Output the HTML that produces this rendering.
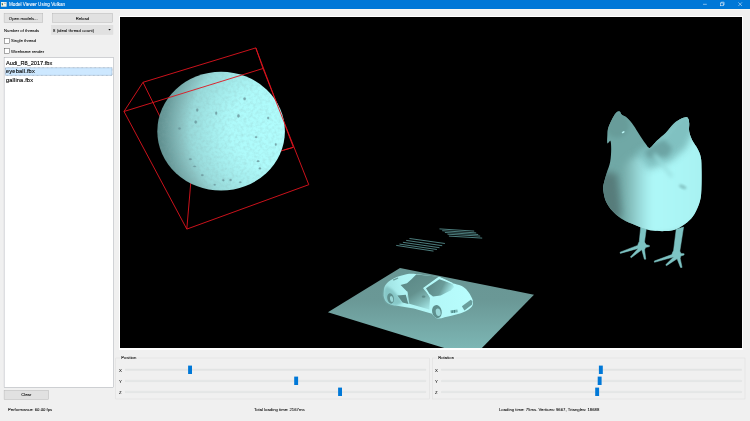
<!DOCTYPE html>
<html>
<head>
<meta charset="utf-8">
<title>Model Viewer Using Vulkan</title>
<style>
html,body{margin:0;padding:0;}
body{width:750px;height:421px;overflow:hidden;background:#f0f0f0;position:relative;font-family:"Liberation Sans",sans-serif;color:#000;}
.abs{position:absolute;}
.t{position:absolute;margin-top:0.6px;font-size:10.9px;line-height:15.36px;white-space:nowrap;color:#000;transform:scale(0.390625);transform-origin:0 0;-webkit-text-stroke:0.15px currentColor;filter:blur(0.5px);}
#titlebar{left:0;top:0;width:750px;height:8.6px;background:#0078d7;}
#title{left:9.2px;top:1.1px;color:#fff;font-size:11.8px;}
.bt{text-align:center;}
.li{position:absolute;left:6.2px;font-size:14.4px;line-height:22px;white-space:nowrap;color:#000;transform:scale(0.390625);transform-origin:0 0;-webkit-text-stroke:0.3px currentColor;filter:blur(0.5px);}
#view{left:119.8px;top:17.2px;width:622.2px;height:331.3px;background:#000;overflow:hidden;}
#viewb{left:118.6px;top:16px;width:624.6px;height:333.7px;background:#fff;}
.gt{position:absolute;font-size:10.9px;line-height:15.36px;background:#f0f0f0;padding:0 3px;color:#000;transform:scale(0.390625);transform-origin:0 0;white-space:nowrap;-webkit-text-stroke:0.15px currentColor;filter:blur(0.5px);}
</style>
</head>
<body>
<div id="titlebar" class="abs"></div>
<div class="abs" style="left:0;top:8.6px;width:750px;height:1.6px;background:#f8f8f3;"></div>
<svg class="abs" style="left:1.1px;top:2px" width="5.6" height="4.7" viewBox="0 0 5.6 4.7"><rect x="0" y="0" width="5.6" height="4.7" fill="#f1f1e6"/><rect x="0.8" y="1" width="1.1" height="2.2" rx="0.5" fill="#2f6a50"/><rect x="3" y="0.7" width="1.8" height="1.2" fill="#b9bcc0"/></svg>
<div id="title" class="t">Model Viewer Using Vulkan</div>
<svg class="abs" style="left:690px;top:0" width="60" height="8.6" viewBox="0 0 60 8.6">
<path d="M13 4.3h3.8" stroke="#fff" stroke-width="0.5" fill="none"/>
<rect x="30.4" y="3" width="2.8" height="2.8" stroke="#fff" stroke-width="0.5" fill="none"/>
<path d="M31.3 3V2.2h2.8v2.8h-0.9" stroke="#fff" stroke-width="0.5" fill="none"/>
<path d="M48.4 2.4l3.6 3.6M52 2.4l-3.6 3.6" stroke="#fff" stroke-width="0.5" fill="none"/>
</svg>

<svg class="abs" style="left:0;top:0" width="750" height="421" viewBox="0 0 750 421">
<g fill="#e1e1e1" stroke="#adadad" stroke-width="0.4">
<rect x="4.1" y="13.4" width="38.7" height="9"/>
<rect x="52.5" y="13.4" width="60.2" height="9"/>
<rect x="4.1" y="390.4" width="44.6" height="9.1"/>
</g>
<rect x="51.5" y="25.2" width="61.5" height="9.2" fill="#e1e1e1" stroke="#dadada" stroke-width="0.4"/>
<path d="M108.3 29h2.5l-1.25 1.4z" fill="#111"/>
<g fill="#fff" stroke="#333" stroke-width="0.4">
<rect x="4.5" y="38.5" width="4.7" height="4.7"/>
<rect x="4.5" y="48.65" width="4.7" height="4.7"/>
</g>
<rect x="4.1" y="57.6" width="109.4" height="329.7" fill="#fff" stroke="#828790" stroke-width="0.33"/>
<rect x="5.5" y="67.7" width="106.6" height="7.7" fill="#cde8ff" stroke="#3f5f7f" stroke-width="0.45" stroke-dasharray="0.8 0.5"/>
<g fill="none" stroke="#d8d8d8" stroke-width="0.4">
<rect x="115.8" y="358" width="313.4" height="41"/>
<rect x="432.6" y="358" width="312.4" height="41"/>
</g>
<g fill="#e4e6e6" stroke="#d8d8d8" stroke-width="0.2">
<rect x="125.3" y="369" width="300.6" height="1.5" rx="0.5"/>
<rect x="125.3" y="380.2" width="300.6" height="1.5" rx="0.5"/>
<rect x="125.3" y="391.2" width="300.6" height="1.5" rx="0.5"/>
<rect x="441.2" y="369" width="300.5" height="1.5" rx="0.5"/>
<rect x="441.2" y="380.2" width="300.5" height="1.5" rx="0.5"/>
<rect x="441.2" y="391.2" width="300.5" height="1.5" rx="0.5"/>
</g>
<g fill="#0078d7">
<rect x="188.1" y="365.6" width="3.9" height="8.4"/>
<rect x="294.2" y="376.6" width="3.9" height="8.4"/>
<rect x="338.1" y="387.6" width="3.9" height="8.4"/>
<rect x="598.9" y="365.6" width="3.9" height="8.4"/>
<rect x="597.7" y="376.6" width="3.9" height="8.4"/>
<rect x="595.2" y="387.6" width="3.9" height="8.4"/>
</g>
</svg>
<div class="t bt" style="left:4.2px;top:15.1px;width:98.8px;">Open models...</div>
<div class="t bt" style="left:52.2px;top:15.1px;width:155.6px;">Reload</div>
<div class="t" style="left:4.2px;top:27.1px;">Number of threads</div>
<div class="t" style="left:53.3px;top:27.1px;letter-spacing:0.12px;">8 (ideal thread count)</div>
<div class="t" style="left:11.2px;top:37.9px;">Single thread</div>
<div class="t" style="left:11.2px;top:48.2px;">Wireframe render</div>

<div class="li" style="top:58.8px;">Audi_R8_2017.fbx</div>
<div class="li" style="top:67.3px;left:5.6px;letter-spacing:0.48px;">eyeball.fbx</div>
<div class="li" style="top:76px;letter-spacing:0.42px;">gallina.fbx</div>

<div class="t bt" style="left:4.3px;top:391.9px;width:113.9px;">Clear</div>
<div class="t" style="left:7.6px;top:406.8px;">Performance: 60.00 fps</div>
<div class="t" style="left:253.5px;top:406.8px;">Total loading time: 2167ms</div>
<div class="t" style="left:498.7px;top:406.8px;">Loading time: 75ms. Vertices: 9667, Triangles: 18688</div>

<div class="gt" style="left:119.9px;top:355.2px;">Position</div>
<div class="gt" style="left:436.5px;top:355.2px;">Rotation</div>

<div class="t" style="left:118.8px;top:367.1px;">X</div>
<div class="t" style="left:118.8px;top:378.2px;">Y</div>
<div class="t" style="left:118.8px;top:389.2px;">Z</div>

<div class="t" style="left:435.2px;top:367.1px;">X</div>
<div class="t" style="left:435.2px;top:378.2px;">Y</div>
<div class="t" style="left:435.2px;top:389.2px;">Z</div>

<div id="viewb" class="abs"></div>
<div id="view" class="abs">
<svg width="622.2" height="331.3" viewBox="119.8 17.2 622.2 331.3" style="position:absolute;left:0;top:0;display:block">
<defs>
<radialGradient id="gs" cx="270" cy="129" r="125" gradientUnits="userSpaceOnUse">
<stop offset="0" stop-color="#b0fdfd"/><stop offset="0.32" stop-color="#aefafa"/><stop offset="0.48" stop-color="#a4ecec"/><stop offset="0.64" stop-color="#98dada"/><stop offset="0.72" stop-color="#88c0c0"/><stop offset="0.84" stop-color="#6a9c9c"/><stop offset="0.92" stop-color="#5a8888"/><stop offset="1" stop-color="#507c7c"/>
</radialGradient>
<linearGradient id="gp" x1="0" y1="268" x2="0" y2="348" gradientUnits="userSpaceOnUse">
<stop offset="0" stop-color="#699694"/><stop offset="0.4" stop-color="#6a9896"/><stop offset="0.65" stop-color="#72a4a2"/><stop offset="1" stop-color="#7cb6b4"/>
</linearGradient>
<linearGradient id="gc" x1="603" y1="150" x2="700" y2="200" gradientUnits="userSpaceOnUse">
<stop offset="0" stop-color="#78c4c4"/><stop offset="0.45" stop-color="#9be2e2"/><stop offset="0.8" stop-color="#b0f6f6"/><stop offset="1" stop-color="#a4ecec"/>
</linearGradient>
<filter id="nz" x="0" y="0" width="1" height="1"><feTurbulence type="fractalNoise" baseFrequency="0.32" numOctaves="2" seed="7" result="n"/><feColorMatrix in="n" type="matrix" values="0 0 0 0 0.25  0 0 0 0 0.42  0 0 0 0 0.42  1.6 0 0 0 -0.62" result="c"/><feComposite in="c" in2="SourceGraphic" operator="in"/></filter>
</defs>
<!-- back edges of bounding box -->
<g stroke="#e0141e" stroke-width="0.9" fill="none">
<path d="M142.8 82.5L255.6 48.1L293.2 147.5L190 178L142.8 82.5M186.6 229.3L191 178"/>
</g>
<!-- sphere -->
<ellipse cx="220.9" cy="131.4" rx="63.8" ry="59.4" fill="url(#gs)"/>
<ellipse cx="220.9" cy="131.4" rx="63.3" ry="58.9" fill="#fff" filter="url(#nz)" opacity="0.3"/>
<g fill="#6a949a" stroke="#6a949a" stroke-width="0.25" opacity="0.8">
<ellipse cx="197" cy="110.2" rx="1.1" ry="1.5"/><ellipse cx="216" cy="113.3" rx="1" ry="1.7"/><ellipse cx="195.5" cy="122.1" rx="1.2" ry="1.5"/><ellipse cx="179.3" cy="128.7" rx="1.3" ry="1"/>
<ellipse cx="244.4" cy="98.9" rx="1.2" ry="1.3"/><ellipse cx="238.2" cy="116.1" rx="1.2" ry="1.6"/><ellipse cx="267.9" cy="118.2" rx="0.9" ry="1.3"/>
<ellipse cx="190.2" cy="159.4" rx="1.3" ry="0.9"/><ellipse cx="194.4" cy="166.6" rx="1.4" ry="0.7"/><ellipse cx="202.1" cy="175.3" rx="1.3" ry="0.9"/><ellipse cx="214.5" cy="184.9" rx="1.1" ry="0.8"/>
<ellipse cx="255.9" cy="137.3" rx="1.2" ry="0.9"/><ellipse cx="275.6" cy="144.7" rx="0.8" ry="1.3"/><ellipse cx="257.9" cy="161.4" rx="1.4" ry="0.9"/><ellipse cx="259.7" cy="168.6" rx="1.2" ry="0.9"/>
<ellipse cx="223.1" cy="180.5" rx="1" ry="1"/><ellipse cx="230.4" cy="180.2" rx="1.1" ry="1"/><ellipse cx="240.1" cy="182.5" rx="1.2" ry="0.8"/>
</g>
<!-- front edges of bounding box -->
<g stroke="#e0141e" stroke-width="0.9" fill="none">
<path d="M142.8 82.5L123.8 111.7L262.8 68.7L255.6 48.1M262.8 68.7L308.6 184.9L186.6 229.3L123.8 111.7M283.4 150.3L293.2 147.5"/>
</g>
<!-- ground plane -->
<path d="M327.7 312.5L399.8 268.3L533.8 295L481.4 348.5L445 348.5z" fill="url(#gp)"/>
<!-- floating grilles -->
<g stroke="#66a8a8" stroke-width="0.75" fill="none">
<path d="M409.3 238.7L444.7 243.7M406 240.6L442 245.9M402.7 242.5L439.3 247.9M399.3 244.3L436.7 249.7M396 245.6L433.3 251.3"/>
<path d="M439.3 229.1L474 231.3M442 230.9L476 233.1M444.7 232.7L478 234.7M447.3 234.4L480 236.3M448.7 236.3L482 238.3"/>
</g>
<defs>
<linearGradient id="gcb" x1="384" y1="300" x2="470" y2="285" gradientUnits="userSpaceOnUse">
<stop offset="0" stop-color="#9ddede"/><stop offset="0.25" stop-color="#b0f4f4"/><stop offset="1" stop-color="#b8fdfd"/>
</linearGradient>
<linearGradient id="gck" x1="408" y1="278" x2="428" y2="308" gradientUnits="userSpaceOnUse">
<stop offset="0" stop-color="#5d8a88"/><stop offset="0.45" stop-color="#64928f"/><stop offset="0.75" stop-color="#80b8b6"/><stop offset="1" stop-color="#a0e2e2"/>
</linearGradient>
<linearGradient id="gws" x1="430" y1="284" x2="450" y2="294" gradientUnits="userSpaceOnUse">
<stop offset="0" stop-color="#5d8a88"/><stop offset="0.55" stop-color="#6a9c9a"/><stop offset="1" stop-color="#a6ecec"/>
</linearGradient>
</defs>
<g>
<!-- body -->
<path d="M383.8 289.8C384 287.5 384.6 286 385.7 284.7C387 283 388.6 281.5 390.8 280.2C392.8 279 394.8 277.9 397.2 277C400 276 403 275 406.2 274.4C409 274 412.5 273.9 415.2 274.2L438.6 277.2C443.5 279 448 281.5 452.1 283.4C455.5 284.3 458.3 284.8 461 286C463.6 287.4 465.7 289 467.4 291.1C469 293 470.4 295.2 471.3 297.5C472.2 299.2 472.8 301 472.8 302.6C472.8 304.5 472.4 306 471.3 307.1C469.6 308.9 467.4 310.4 464.9 311.6C462.2 313 459.2 314 455.9 314.8C452.2 316 448.3 316.9 444.4 317.4C442 318.4 439.5 318.8 437 318.6C434.8 318 433 316 431.8 314L413.6 308.8L395.1 305.6C393.6 305.8 391.5 305.4 390 304.5C388.4 303.9 387 303 386 302C384.6 300.3 383.9 298.2 383.5 295.9C383.5 293.7 383.6 291.8 383.8 289.8z" fill="url(#gcb)"/>
<!-- rear side -->
<path d="M383.8 290L386.4 286.2L392 289.6L397 295L402.6 303L396 305.6L390 304.5L386 302L383.5 296z" fill="#84c4c4" filter="url(#b1)" opacity="0.9"/>
<path d="M392.6 279.8L397.6 277.6L398.2 278.6L393.4 280.9z" fill="#6a9e9c"/>
<!-- cockpit -->
<path d="M416 274.6L439.1 276.9L424.4 288.2L429.8 298.2L429.1 309.6L408.2 303.8L406.8 291.7L400.4 285.3L406.8 283.4L411.3 279.5z" fill="url(#gck)"/>
<!-- windshield glass -->
<path d="M425.8 288.5L439.2 279.5L452.1 284L454 287.2L450.8 290.4L440.5 295.6L432.8 296.8L429 293.6z" fill="url(#gws)"/>
<!-- windshield frame -->
<path d="M431.6 298L423.6 288.4L438.8 277.4L452.5 283.6" stroke="#b6fbfb" stroke-width="1.1" fill="none" stroke-linejoin="round"/>
<!-- door edge -->
<path d="M406.9 291.7L408.6 304" stroke="#b0f4f4" stroke-width="0.8" fill="none"/>
<!-- side intake -->
<path d="M397.2 295.6L405.6 294.9L408.2 304.2L402.4 302.6z" fill="#5d8a88"/>
<!-- mirror -->
<ellipse cx="423.4" cy="296.9" rx="1.9" ry="1.1" fill="#5d8a88"/>
<!-- wheels -->
<ellipse cx="390.4" cy="298.6" rx="3.3" ry="5.3" fill="#5f908e" transform="rotate(-12 390.4 298.6)"/>
<ellipse cx="391.4" cy="299.2" rx="1.6" ry="3" fill="#9ad8d8" transform="rotate(-12 391.4 299.2)"/>
<ellipse cx="436.7" cy="311.8" rx="4.8" ry="6.6" fill="#5f908e" transform="rotate(-12 436.7 311.8)"/>
<ellipse cx="438" cy="312.4" rx="2.4" ry="3.8" fill="#9ad8d8" transform="rotate(-12 438 312.4)"/>
<!-- grille -->
<path d="M461.7 306.5L470.6 300L472.4 301.8L471.7 305L464.2 310.8z" fill="#6a9e9c"/>
<path d="M450.1 310.6L457.2 309.6L457.6 312.4L450.6 313.4z" fill="#7ab6b4"/>
<path d="M452 310.6v2.6M454.2 310.2v2.8" stroke="#3f7c7c" stroke-width="0.9"/>
</g>

<defs>
<clipPath id="cpc"><path d="M619.6 111.7C620.5 112.1 620.5 113.9 621.7 115.0C622.9 116.1 625.0 116.4 627.0 118.2C629.0 120.0 631.4 122.9 633.4 125.6C635.4 128.3 636.8 131.2 638.8 134.2C640.8 137.2 643.4 141.5 645.2 143.8C647.0 146.1 647.5 148.6 649.5 148.1C651.5 147.6 654.2 143.1 656.9 140.6C659.6 138.1 662.6 135.9 665.5 133.1C668.4 130.2 671.5 125.8 674.0 123.5C676.5 121.2 678.4 120.2 680.4 119.2C682.4 118.2 684.5 117.6 685.8 117.5C687.0 117.4 687.4 117.8 687.9 118.8C688.4 119.8 688.8 121.3 689.0 123.5C689.2 125.7 688.5 129.2 689.0 132.0C689.5 134.8 690.8 137.8 692.2 140.6C693.6 143.4 696.1 146.2 697.5 149.1C698.9 151.9 700.1 154.1 700.7 157.7C701.4 161.3 701.3 165.1 701.4 170.5C701.5 175.9 701.5 184.8 701.2 189.9C700.9 195.1 700.9 197.4 699.7 201.4C698.6 205.4 696.4 210.6 694.3 214.2C692.1 217.8 689.8 220.2 686.8 222.7C683.8 225.2 679.8 227.7 676.2 229.1C672.7 230.5 669.4 231.0 665.5 231.3C661.6 231.6 656.6 231.3 652.7 230.8C648.8 230.3 645.6 229.3 642.0 228.1C638.4 226.9 634.9 225.4 631.3 223.8C627.7 222.2 623.8 220.5 620.6 218.4C617.4 216.3 614.6 213.8 612.1 211.0C609.6 208.2 607.2 204.8 605.7 201.4C604.2 198.0 603.5 193.4 603.1 190.7C602.7 188.0 602.7 188.0 603.3 185.0C603.9 182.0 605.6 176.4 606.7 172.6C607.8 168.8 609.3 165.8 610.0 161.9C610.7 158.0 611.0 152.6 611.0 149.1C611.0 145.6 610.8 141.9 610.2 141.0C609.6 140.1 607.7 144.5 607.2 143.5C606.7 142.5 607.0 137.8 607.2 135.2C607.4 132.6 607.3 130.6 608.2 127.8C609.1 125.0 611.1 120.8 612.5 118.2C613.9 115.6 615.2 113.5 616.4 112.4C617.6 111.3 618.7 111.3 619.6 111.7z"/></clipPath>
<linearGradient id="gcb2" x1="622" y1="0" x2="701" y2="0" gradientUnits="userSpaceOnUse">
<stop offset="0" stop-color="#74aaa8"/><stop offset="0.1" stop-color="#84bebc"/><stop offset="0.23" stop-color="#9adcdc"/><stop offset="0.38" stop-color="#aef8f8"/><stop offset="1" stop-color="#a8f2f2"/>
</linearGradient>
<filter id="b2" x="-20%" y="-20%" width="140%" height="140%"><feGaussianBlur stdDeviation="2"/></filter>
<filter id="b1" x="-20%" y="-20%" width="140%" height="140%"><feGaussianBlur stdDeviation="1"/></filter>
<filter id="b3" x="-30%" y="-30%" width="160%" height="160%"><feGaussianBlur stdDeviation="3.5"/></filter>
</defs>
<g>
<!-- legs -->
<g fill="#7dc3c3" stroke="#7dc3c3" stroke-width="0.5" stroke-linejoin="round">
<path d="M640.6 226.5L646.3 227.5L644.1 243.7L638.9 243.7z"/>
<path d="M638.6 242.6L644.6 242.6L646 245L649.2 245.6L649.2 246.8L645.4 247.6L644.4 250L645.6 259.4L644.2 259.4L641.6 250L631 257.9L630.2 257.2L638 248.6L620.1 253.6L619.9 252.4L637.4 245.6z"/>
<path d="M676 229.5L683.4 227.3L679.4 252.8L673.1 252.8z"/>
<path d="M672.8 251.6L679.8 251.6L680.8 253.6L683.9 253.9L683.9 255.1L680.6 256.2L680 258.6L681.9 267.6L680.3 267.6L676.9 259L666.3 265.9L665.5 265L673.4 257.2L654.3 262.5L654.1 261.2L671.6 254.8z"/>
</g>
<g clip-path="url(#cpc)">
<rect x="600" y="108" width="105" height="126" fill="#70a8a6"/>
<!-- head slightly darker -->
<ellipse cx="617" cy="125" rx="12" ry="13" fill="#679c9a" filter="url(#b2)"/>
<!-- bright body -->
<path d="M622 168L632 158L644 154L652 148L662 138L676 124L688 110L712 110L712 244L630 244L624 212L621 186z" fill="url(#gcb2)" filter="url(#b3)"/>
<!-- dark breast -->
<path d="M592 176L606 172L617 174L619 192L621 214L612 232L592 232z" fill="#567c7a" filter="url(#b3)"/>
<!-- tail fold shadow -->
<path d="M636 152L650 146L662 136L676 120L688 108L696 126L686 148L670 162L648 170z" fill="#7ebebe" opacity="0.95" filter="url(#b3)"/>
<path d="M644 152L654 144L664 140L672 148L668 156L656 158L648 158z" fill="#6ca4a4" filter="url(#b2)"/>
<!-- wing fold -->
<path d="M654 154C660 162 666 170 672 177" stroke="#98dede" stroke-width="3" fill="none" filter="url(#b2)"/>
<!-- dimple -->
<ellipse cx="682.6" cy="187" rx="4" ry="1.8" fill="#84c4c4" transform="rotate(25 682.6 187)" filter="url(#b1)"/>
<!-- eye highlight -->
<ellipse cx="623" cy="132.4" rx="1.6" ry="0.8" fill="#b8f4f4" transform="rotate(-30 623 132.4)"/>
<!-- bottom shade -->
<path d="M640 236L700 236L704 210C694 226 676 233 660 233z" fill="#8cd0d0" filter="url(#b2)"/>
</g>
</g>

</svg>
</div>
</body>
</html>
